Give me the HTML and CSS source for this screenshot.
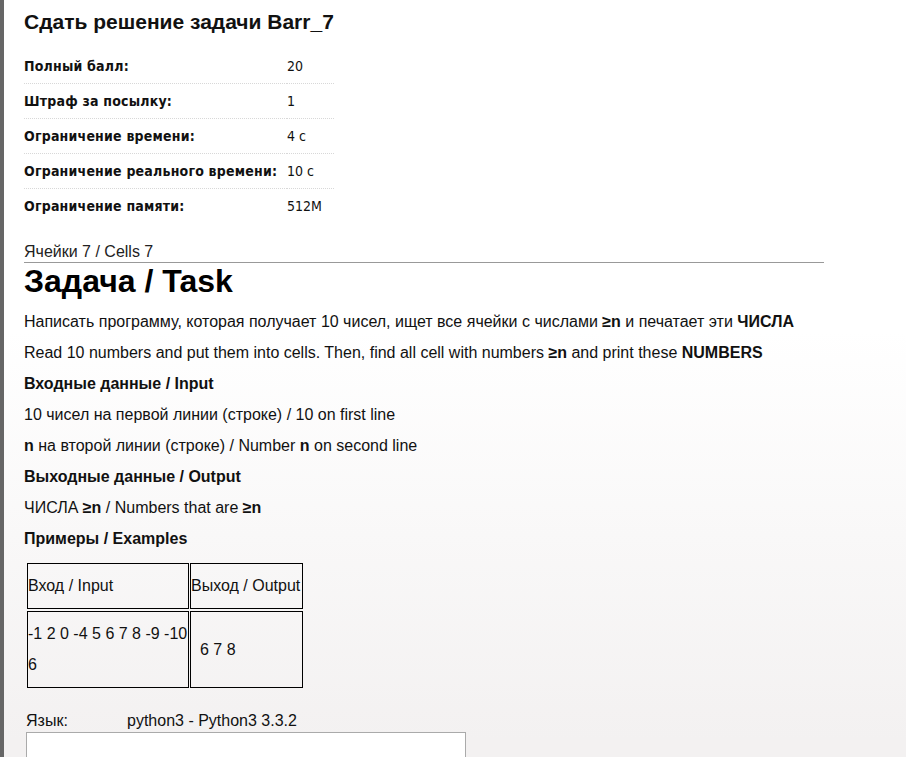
FILE: index.html
```html
<!DOCTYPE html>
<html lang="ru">
<head>
<meta charset="utf-8">
<title>Сдать решение задачи Barr_7</title>
<link rel="stylesheet" href="styles.css">
</head>
<body>
<div class="page">
  <h2 class="title">Сдать решение задачи Barr_7</h2>
  <table class="info">
    <tr><td class="lbl">Полный балл:</td><td class="val">20</td></tr>
    <tr><td class="lbl">Штраф за посылку:</td><td class="val">1</td></tr>
    <tr><td class="lbl">Ограничение времени:</td><td class="val">4 с</td></tr>
    <tr><td class="lbl">Ограничение реального времени:</td><td class="val">10 с</td></tr>
    <tr><td class="lbl">Ограничение памяти:</td><td class="val">512M</td></tr>
  </table>
  <div class="crumb">Ячейки 7 / Cells 7</div>
  <h1 class="task-title">Задача / Task</h1>
  <div class="statement">
    <p>Написать программу, которая получает 10 чисел, ищет все ячейки с числами <b>≥n</b> и печатает эти <b>ЧИСЛА</b></p>
    <p>Read 10 numbers and put them into cells. Then, find all cell with numbers <b>≥n</b> and print these <b>NUMBERS</b></p>
    <p><b>Входные данные / Input</b></p>
    <p>10 чисел на первой линии (строке) / 10 on first line</p>
    <p><b>n</b> на второй линии (строке) / Number <b>n</b> on second line</p>
    <p><b>Выходные данные / Output</b></p>
    <p>ЧИСЛА <b>≥n</b> / Numbers that are <b>≥n</b></p>
    <p><b>Примеры / Examples</b></p>
  </div>
  <table class="examples">
    <tr><td class="c1">Вход / Input</td><td class="c2 nowrap">Выход / Output</td></tr>
    <tr><td class="c1">-1 2 0 -4 5 6 7 8 -9 -10 6</td><td class="c2"><span class="out">6 7 8</span></td></tr>
  </table>
  <div class="lang-row">
    <span class="lang-label">Язык:</span>
    <span class="lang-value">python3 - Python3 3.3.2</span>
  </div>
  <div class="code-box"></div>
</div>
</body>
</html>
```
FILE: styles.css
```css
html, body {
  margin: 0;
  padding: 0;
}
body {
  min-height: 757px;
  border-left: 4px solid #666;
  background: linear-gradient(to bottom, #ffffff 0, #ffffff 330px, #f3f1f1 740px);
  font-family: "Liberation Sans", Arial, sans-serif;
  color: #000;
}
.page {
  padding-left: 20px;
  width: 800px;
}
.title {
  margin: 0;
  padding-top: 10px;
  font-size: 21px;
  line-height: 24px;
  font-weight: bold;
  color: #111;
}
.info {
  margin-top: 15px;
  border-collapse: collapse;
  width: 310px;
  font-family: "DejaVu Sans Condensed", "DejaVu Sans", Tahoma, sans-serif;
  font-stretch: condensed;
  font-size: 14px;
  color: #111;
}
.info td {
  height: 34px;
  padding: 0;
  border-bottom: 1px dotted #d8d8d8;
  vertical-align: middle;
}
.info tr:last-child td {
  border-bottom: none;
}
.info .lbl {
  width: 263px;
  font-weight: bold;
  letter-spacing: 0.2px;
}
.crumb {
  margin-top: 19px;
  font-size: 16px;
  line-height: 20px;
  color: #222;
  border-bottom: 1px solid #999;
}
.task-title {
  margin: 0;
  font-size: 32px;
  line-height: 37px;
  font-weight: bold;
}
.statement {
  margin-top: 6px;
}
.statement p {
  margin: 0;
  font-size: 16px;
  line-height: 31px;
  color: #111;
}
.examples {
  margin-top: 7px;
  margin-left: 2px;
  border-spacing: 1px 2px;
  table-layout: fixed;
  font-size: 16px;
  color: #111;
}
.examples td {
  border: 1px solid #000;
  padding: 6px 0 7px 0;
  line-height: 31px;
  vertical-align: middle;
}
.examples .c1 {
  width: 160px;
}
.examples .c2 {
  width: 111px;
}
.nowrap {
  white-space: nowrap;
}
.out {
  padding-left: 9px;
}
.lang-row {
  margin-top: 22px;
  padding-left: 2px;
  display: flex;
  font-size: 16px;
  line-height: 18px;
  color: #111;
}
.lang-label {
  width: 101px;
}
.code-box {
  margin-top: 2px;
  margin-left: 2px;
  width: 438px;
  height: 60px;
  background: #fff;
  border: 1px solid #aaa;
}
```
